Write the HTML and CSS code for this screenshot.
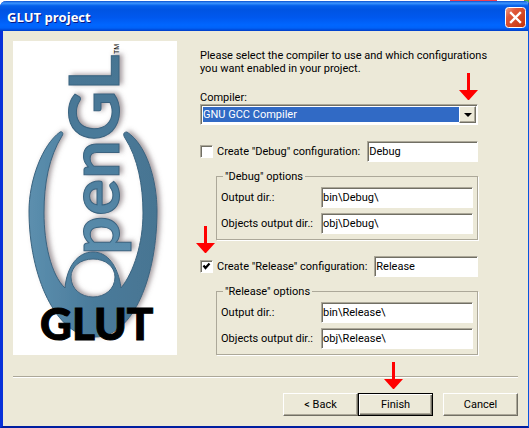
FILE: index.html
```html
<!DOCTYPE html>
<html lang="en">
<head>
    <meta charset="UTF-8">
    <meta name="viewport" content="width=device-width, initial-scale=1.0">
    <title>GLUT project</title>
    <link rel="stylesheet" href="styles.css">
</head>
<body>
    <div class="window">
        <header class="titlebar">
            <h1>GLUT project</h1>
            <button type="button" class="close" aria-label="Close">
                <svg width="21" height="21" viewBox="0 0 21 21">
                    <defs>
                        <linearGradient id="closeFace" x1="0" y1="0" x2="1" y2="1">
                            <stop offset="0" stop-color="#f0a48c"/>
                            <stop offset="0.3" stop-color="#e0583a"/>
                            <stop offset="1" stop-color="#c23208"/>
                        </linearGradient>
                    </defs>
                    <rect x="0.5" y="0.5" width="20" height="20" rx="3" fill="url(#closeFace)" stroke="#fff"/>
                    <path d="M6 6l9 9M15 6l-9 9" stroke="#fff" stroke-width="2.4" stroke-linecap="square"/>
                </svg>
            </button>
        </header>

        <form class="wizard">
            <div class="page">
                <svg class="banner" width="164" height="314" viewBox="0 0 164 314" role="img" aria-label="OpenGL GLUT">
                    <defs>
                        <linearGradient id="steel" x1="0" y1="0" x2="1" y2="0">
                            <stop offset="0" stop-color="#5c8fae"/>
                            <stop offset="0.5" stop-color="#4a7b9b"/>
                            <stop offset="1" stop-color="#477592"/>
                        </linearGradient>
                        <filter id="shadow" x="-20%" y="-20%" width="150%" height="150%">
                            <feDropShadow dx="3" dy="-1" stdDeviation="2.5" flood-color="#6b5a60" flood-opacity="0.6"/>
                        </filter>
                    </defs>
                    <rect width="164" height="314" fill="#fff"/>
                    <g filter="url(#shadow)" fill="url(#steel)" stroke="#3a6480">
                        <path d="M47 91C29 104 16 140 16 170C16 235 43 296 82 296C121 296 144 234 144 170C144 140 134 104 114 91C110 91 110 94 112 97C125 117 130 145 130 172C130 202 121 231 108 247C105 224 94 211 80 211C65 211 54 225 52 247C38 234 31 202 31 172C31 142 36 116 49 95C51 92 49 90 47 91ZM80 218C93 218 102 226 102 236C102 248 92 256 80 256C68 256 58 248 58 236C58 226 67 218 80 218Z"/>
                        <text class="logo-word" transform="translate(106 214) rotate(-90)">penGL</text>
                    </g>
                    <text class="logo-tm" transform="translate(106 13) rotate(-90)">TM</text>
                    <text class="logo-glut" x="27" y="299">GLUT</text>
                </svg>

                <div class="settings">
                    <p class="intro">Please select the compiler to use and which configurations you want enabled in your project.</p>

                    <label for="compiler">Compiler:</label>
                    <div class="combo">
                        <select id="compiler" name="compiler">
                            <option>GNU GCC Compiler</option>
                        </select>
                        <span class="drop"></span>
                        <svg class="arrow arrow-combo" width="19" height="27" viewBox="0 0 19 27"><path d="M8 0h3v17h8l-9 10h-1l-9-10h8z"/></svg>
                    </div>

                    <div class="config">
                        <input type="checkbox" id="debug" class="check">
                        <label for="debug">Create "Debug" configuration:</label>
                        <input type="text" class="field" aria-label="Debug configuration name" value="Debug">
                    </div>
                    <fieldset>
                        <legend>"Debug" options</legend>
                        <label for="debugOut">Output dir.:</label>
                        <input type="text" id="debugOut" class="field" value="bin\Debug\">
                        <label for="debugObj">Objects output dir.:</label>
                        <input type="text" id="debugObj" class="field" value="obj\Debug\">
                    </fieldset>

                    <div class="config">
                        <input type="checkbox" id="release" class="check" checked>
                        <label for="release">Create "Release" configuration:</label>
                        <input type="text" class="field" aria-label="Release configuration name" value="Release">
                        <svg class="arrow arrow-release" width="19" height="27" viewBox="0 0 19 27"><path d="M8 0h3v17h8l-9 10h-1l-9-10h8z"/></svg>
                    </div>
                    <fieldset>
                        <legend>"Release" options</legend>
                        <label for="releaseOut">Output dir.:</label>
                        <input type="text" id="releaseOut" class="field" value="bin\Release\">
                        <label for="releaseObj">Objects output dir.:</label>
                        <input type="text" id="releaseObj" class="field" value="obj\Release\">
                    </fieldset>
                </div>
            </div>

            <footer class="buttons">
                <button type="button" class="btn">&lt; Back</button>
                <div class="finish">
                    <button type="submit" class="btn btn-default">Finish</button>
                    <svg class="arrow arrow-finish" width="19" height="27" viewBox="0 0 19 27"><path d="M8 0h3v17h8l-9 10h-1l-9-10h8z"/></svg>
                </div>
                <button type="button" class="btn btn-cancel">Cancel</button>
            </footer>
        </form>
    </div>
</body>
</html>
```
FILE: styles.css
```css
* {
    box-sizing: border-box;
}
body {
    margin: 0;
    padding-top: 1px;
    background: linear-gradient(to right, transparent 85%, #f04050 85%, #f04050 94%, transparent 94%, transparent 99%, #4caf50 99%) top / 100% 4px no-repeat #fff;
    font-family: Roboto, Tahoma, sans-serif;
    font-size: 11px;
    line-height: 13px;
    color: #000;
}
.window {
    display: flex;
    flex-direction: column;
    min-height: calc(100vh - 1px);
    background: #ece9d8;
    border: solid #0855dd;
    border-width: 0 1px 2px 3px;
    border-bottom-color: #001ea0;
    border-left-color: #0831d9;
    border-radius: 6px 3px 0 0;
}
.titlebar {
    display: flex;
    align-items: center;
    justify-content: space-between;
    height: 30px;
    margin-left: -3px;
    padding: 3px 2px 0 7px;
    border-radius: 6px 3px 0 0;
    background: linear-gradient(#0a50d0, #3c96ff 7%, #0560ea 16%, #0054e3 30%, #0058ee 55%, #0066ff 80%, #0062f8 90%, #003dc8);
}
.titlebar h1 {
    margin: 0;
    font-family: "Open Sans", "Trebuchet MS", sans-serif;
    font-size: 13px;
    font-weight: bold;
    color: #fff;
    text-shadow: 1px 1px #0a1883;
}
.close {
    display: flex;
    padding: 0;
    border: none;
    background: none;
}
.wizard {
    flex: 1;
    display: flex;
    flex-direction: column;
    padding: 10px;
}
.page {
    display: flex;
    gap: 23px;
    padding-bottom: 21px;
    border-bottom: 1px solid #aca899;
    box-shadow: 0 1px #fff;
}
.banner {
    flex: none;
    display: block;
}
.logo-word {
    font-family: Lato, sans-serif;
    font-size: 69px;
    font-weight: bold;
}
.logo-tm {
    font-family: "Liberation Sans", Arial, sans-serif;
    font-size: 7px;
}
.logo-glut {
    font-family: Lato, sans-serif;
    font-size: 44px;
    font-weight: 900;
    stroke: #000;
    stroke-width: 1px;
}
.settings {
    flex: 1;
    display: flex;
    flex-direction: column;
    padding: 8px 40px 0 0;
}
.intro {
    margin: 0 -20px 16px 0;
}
.combo,
.field,
.check {
    border: 1px solid;
    border-color: #aca899 #fff #fff #aca899;
    background: #fff;
    box-shadow: inset 1px 1px #716f64;
}
.combo {
    position: relative;
    height: 21px;
    margin-bottom: 16px;
    padding: 2px;
}
.combo select {
    display: block;
    appearance: none;
    width: calc(100% - 16px);
    height: 15px;
    padding: 0;
    border: none;
    border-radius: 0;
    background: #316ac5;
    color: #fff;
    font: inherit;
}
.drop {
    position: absolute;
    top: 1px;
    right: 1px;
    width: 17px;
    height: 17px;
    border: 1px solid;
    border-color: #fff #716f64 #716f64 #fff;
    background: #ece9d8;
    box-shadow: inset -1px -1px #aca899;
    pointer-events: none;
}
.drop::after {
    content: "";
    position: absolute;
    top: 6px;
    left: 4px;
    border: solid transparent;
    border-width: 4px 4px 0;
    border-top-color: #000;
}
.field {
    flex: 1;
    min-width: 0;
    height: 21px;
    padding: 0 0 1px 1px;
    font: inherit;
}
.config {
    position: relative;
    display: flex;
    align-items: center;
    margin-bottom: 8px;
}
.config label {
    margin: 0 7px 0 4px;
}
.check {
    appearance: none;
    flex: none;
    width: 13px;
    height: 13px;
    margin: 0;
}
.check:checked {
    background: #fff url("data:image/svg+xml,%3Csvg xmlns='http://www.w3.org/2000/svg' viewBox='0 0 11 11'%3E%3Cpath d='M2.5 4.5l2 2.5 4-4.5' fill='none' stroke='%23000' stroke-width='2.2'/%3E%3C/svg%3E");
}
fieldset {
    display: grid;
    grid-template-columns: 96px 1fr;
    gap: 5px 4px;
    align-items: center;
    min-width: 0;
    margin: 0 0 16px 16px;
    padding: 4px 4px 5px;
    border: 1px solid #aca899;
    box-shadow: 1px 1px #fff;
}
legend {
    margin-left: 2px;
    padding: 0 2px;
    background: #ece9d8;
}
fieldset label {
    white-space: nowrap;
}
.settings fieldset:last-child {
    margin-bottom: 0;
}
.arrow {
    position: absolute;
    fill: #f00;
    pointer-events: none;
}
.arrow-combo {
    right: -1px;
    bottom: 24px;
}
.arrow-release {
    left: -4px;
    bottom: 24px;
}
.arrow-finish {
    left: 26px;
    bottom: 27px;
}
.buttons {
    display: flex;
    justify-content: flex-end;
    padding-top: 16px;
}
.btn {
    display: block;
    width: 75px;
    height: 23px;
    padding: 0;
    border: 1px solid;
    border-color: #fff #716f64 #716f64 #fff;
    background: #ece9d8;
    box-shadow: inset -1px -1px #aca899;
    font: inherit;
}
.btn-default {
    border-color: #000;
    box-shadow: inset 1px 1px #fff, inset -1px -1px #716f64, inset -2px -2px #aca899;
}
.btn-cancel {
    margin-left: 10px;
}
.finish {
    position: relative;
}
```
